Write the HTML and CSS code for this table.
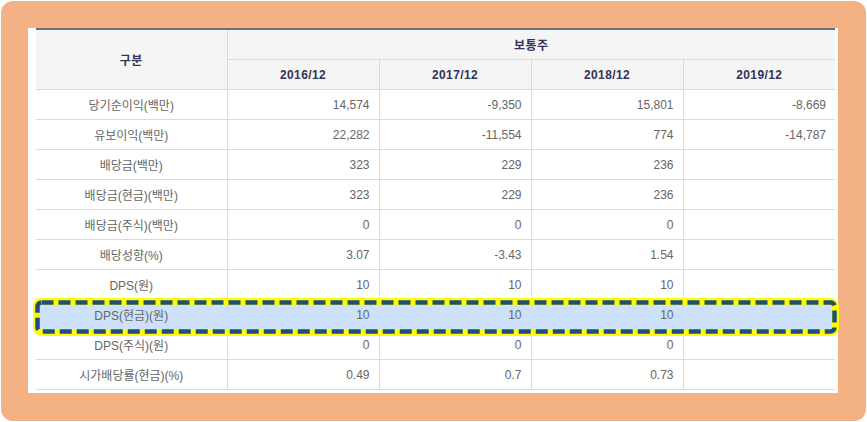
FILE: index.html
```html
<!DOCTYPE html>
<html lang="ko">
<head>
<meta charset="utf-8">
<title>배당 현황</title>
<link rel="stylesheet" href="styles.css">
</head>
<body>
<div class="frame">
  <div class="panel">
    <div class="table-wrap">
      <table class="fin">
        <colgroup>
          <col class="c-label"><col class="c-year"><col class="c-year"><col class="c-year"><col class="c-year">
        </colgroup>
        <thead>
          <tr>
            <th rowspan="2" class="th-label">구분</th>
            <th colspan="4">보통주</th>
          </tr>
          <tr>
            <th>2016/12</th><th>2017/12</th><th>2018/12</th><th>2019/12</th>
          </tr>
        </thead>
        <tbody>
          <tr><td class="lbl">당기순이익(백만)</td><td>14,574</td><td>-9,350</td><td>15,801</td><td>-8,669</td></tr>
          <tr><td class="lbl">유보이익(백만)</td><td>22,282</td><td>-11,554</td><td>774</td><td>-14,787</td></tr>
          <tr><td class="lbl">배당금(백만)</td><td>323</td><td>229</td><td>236</td><td></td></tr>
          <tr><td class="lbl">배당금(현금)(백만)</td><td>323</td><td>229</td><td>236</td><td></td></tr>
          <tr><td class="lbl">배당금(주식)(백만)</td><td>0</td><td>0</td><td>0</td><td></td></tr>
          <tr><td class="lbl">배당성향(%)</td><td>3.07</td><td>-3.43</td><td>1.54</td><td></td></tr>
          <tr><td class="lbl">DPS(원)</td><td>10</td><td>10</td><td>10</td><td></td></tr>
          <tr class="hl"><td class="lbl">DPS(현금)(원)</td><td>10</td><td>10</td><td>10</td><td></td></tr>
          <tr><td class="lbl">DPS(주식)(원)</td><td>0</td><td>0</td><td>0</td><td></td></tr>
          <tr><td class="lbl">시가배당률(현금)(%)</td><td>0.49</td><td>0.7</td><td>0.73</td><td></td></tr>
        </tbody>
      </table>
      <svg class="mark" width="806" height="38" viewBox="0 0 806 38" aria-hidden="true">
        <rect x="3.5" y="3.5" width="799" height="31" rx="5" fill="none" stroke="#ffff00" stroke-width="7"/>
        <rect x="4.5" y="4.5" width="797" height="29" rx="4" fill="none" stroke="#1f4e79" stroke-width="4.5" stroke-dasharray="12 5"/>
      </svg>
    </div>
  </div>
</div>
</body>
</html>
```

FILE: styles.css
```css
html, body {
  margin: 0;
  padding: 0;
  background: #ffffff;
}

.frame {
  margin: 1px 0 0 1px;
  width: 865px;
  height: 420px;
  box-sizing: border-box;
  border-radius: 12px;
  background: #f4b183;
  padding: 27px 0 0 27px;
}

.panel {
  width: 810px;
  height: 365px;
  box-sizing: border-box;
  background: #ffffff;
  padding: 0 3px 0 8px;
}

.table-wrap {
  position: relative;
  width: 799px;
}

.fin {
  width: 799px;
  border-collapse: collapse;
  table-layout: fixed;
  font-family: "Liberation Sans", "Noto Sans CJK KR", sans-serif;
  font-size: 12px;
  color: #666666;
  border-top: 2px solid #707070;
}

.c-label { width: 191px; }
.c-year { width: 152px; }

.fin th {
  height: 29px;
  padding: 0;
  background: #f5f5f5;
  color: #33335a;
  font-weight: bold;
  letter-spacing: 0.4px;
  text-align: center;
  border-bottom: 1px solid #dadada;
  border-left: 1px solid #dadada;
}

.fin th.th-label {
  border-left: none;
}

.fin td {
  height: 29px;
  padding: 0 9px 0 0;
  text-align: right;
  border-bottom: 1px solid #dadada;
  border-left: 1px solid #dadada;
  white-space: nowrap;
}

.fin td.lbl {
  text-align: center;
  padding: 0;
  border-left: none;
}

.fin tr.hl td {
  background: #cde1fb;
}

.mark {
  position: absolute;
  left: -3px;
  top: 270px;
  pointer-events: none;
}
```
